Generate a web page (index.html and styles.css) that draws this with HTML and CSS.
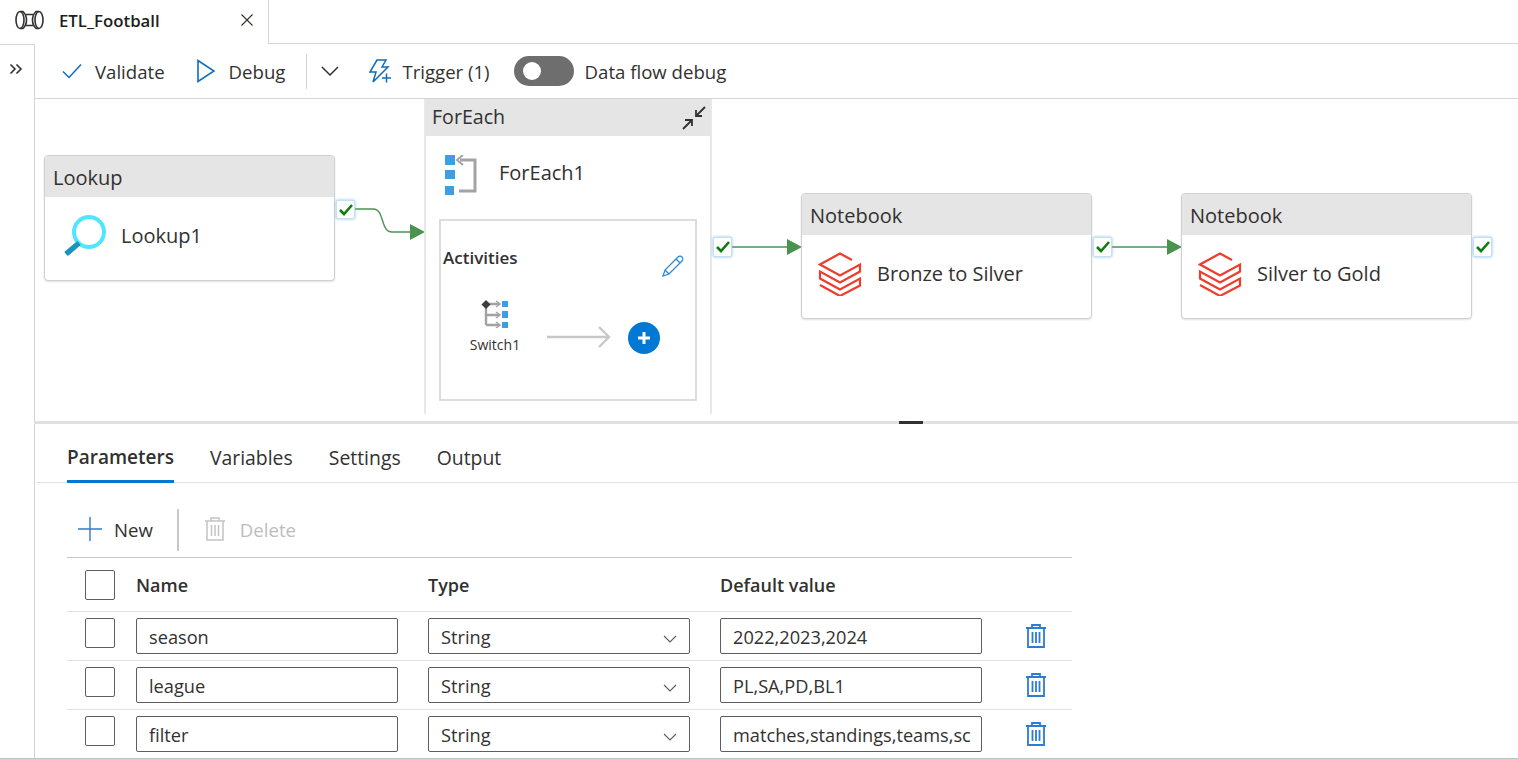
FILE: index.html
```html
<!DOCTYPE html>
<html lang="en">
<head>
    <meta charset="UTF-8">
    <meta name="viewport" content="width=device-width, initial-scale=1.0">
    <title>ETL_Football</title>
    <link rel="stylesheet" href="styles.css">
</head>
<body>

    <div class="tabbar">
        <div class="tab">
            <svg class="tab-icon" width="29" height="20" viewBox="0 0 29 20" fill="none" stroke="#323130" stroke-width="1.6">
                <ellipse cx="5" cy="10" rx="4" ry="8.500"/>
                <ellipse cx="24" cy="10" rx="4" ry="8.500"/>
                <path d="M5 1.500h3c2 2 3.500 5 3.500 8.500S10 16.500 8 18.500H5M11 4.500h7M11 15.500h7M24 1.500h-3c-2 2-3.500 5-3.500 8.500s1.500 6.500 3.500 8.500h3"/>
            </svg>
            <span class="tab-title">ETL_Football</span>
            <svg class="tab-close" width="12" height="12" viewBox="0 0 12 12" stroke="#323130" stroke-width="1.1"><path d="M0.5 0.5l11 11M11.5 0.5l-11 11"/></svg>
        </div>
    </div>

    <div class="main">
        <div class="sidebar">
            <svg width="14" height="12" viewBox="0 0 14 12" fill="none" stroke="#323130" stroke-width="1.6"><path d="M1.5 1.5l4.500 4.500-4.500 4.500M7.500 1.500l4.500 4.500-4.500 4.500"/></svg>
        </div>

        <div class="content">
            <div class="toolbar">
                <button class="tool tool-validate">
                    <svg width="20" height="16" viewBox="0 0 20 16" fill="none" stroke="#0f6cbd" stroke-width="1.5"><path d="M1 8.500l6 6L19 1.500"/></svg>
                    Validate
                </button>
                <button class="tool tool-debug">
                    <svg width="18" height="24" viewBox="0 0 18 24" fill="none" stroke="#0f6cbd" stroke-width="1.6"><path d="M1 1.500v21L17 12z"/></svg>
                    Debug
                </button>
                <span class="tool-sep"></span>
                <svg class="tool-chevron" width="18" height="10" viewBox="0 0 18 10" fill="none" stroke="#323130" stroke-width="1.5"><path d="M1 1l8 8 8-8"/></svg>
                <button class="tool tool-trigger">
                    <svg width="23" height="24" viewBox="0 0 23 24" fill="none" stroke="#0f6cbd" stroke-width="1.5"><path d="M8 1h9l-4 7h6L4 23l3-10H1zM13 19h9M17.500 14.500v9"/></svg>
                    Trigger (1)
                </button>
                <span class="toggle"><span class="toggle-knob"></span></span>
                <span class="tool-label">Data flow debug</span>
            </div>

            <div class="canvas">
                <svg class="links" width="1484" height="322" viewBox="0 0 1484 322" fill="none">
                    <path d="M321 110h18c12 0 7 23 19 23h20" stroke="#4a934f" stroke-width="1.4"/>
                    <path d="M376 125l15 8-15 8z" fill="#4a934f"/>
                    <path d="M698 148h56" stroke="#4a934f" stroke-width="1.6"/>
                    <path d="M753 140l15 8-15 8z" fill="#4a934f"/>
                    <path d="M1078 148h56" stroke="#4a934f" stroke-width="1.6"/>
                    <path d="M1133 140l15 8-15 8z" fill="#4a934f"/>
                </svg>

                <div class="node node-lookup">
                    <div class="node-head">Lookup</div>
                    <div class="node-body">
                        <svg class="node-icon" width="46" height="44" viewBox="0 0 46 44" fill="none">
                            <circle cx="28" cy="18" r="15" stroke="#50e6ff" stroke-width="4"/>
                            <path d="M18 29L5 40" stroke="#1b93c0" stroke-width="5.500"/>
                        </svg>
                        Lookup1
                    </div>
                </div>
                <span class="status status-lookup"><svg width="14" height="12" viewBox="0 0 14 12" fill="none" stroke="#107c10" stroke-width="2.600"><path d="M1 6l4 4 8-9"/></svg></span>

                <div class="node-foreach">
                    <div class="node-head">ForEach
                        <svg class="collapse" width="26" height="26" viewBox="0 0 26 26" fill="none" stroke="#323130" stroke-width="1.800"><path d="M24 2l-9 9M15 5v6h6M2 24l9-9M4 15h7v6"/></svg>
                    </div>
                    <div class="foreach-title">
                        <svg width="32" height="40" viewBox="0 0 32 40" fill="none">
                            <path d="M0 0h10v10H0zM0 15h10v9H0zM0 31h9v9H0z" fill="#3b9fe8"/>
                            <path d="M15 5h15v31H14" stroke="#a3a3a3" stroke-width="3"/>
                            <path d="M18 0l-6 5 6 5" stroke="#a3a3a3" stroke-width="2"/>
                        </svg>
                        <span class="foreach-name">ForEach1</span>
                    </div>
                    <div class="activities">
                        <div class="activities-head">
                            <b>Activities</b>
                            <svg width="22" height="22" viewBox="0 0 22 22" fill="none" stroke="#2b88d8" stroke-width="1.300"><path d="M1 21l2-6L16 2c1-1 3-1 4 0s1 3 0 4L7 19zM3 15l4 4M14 4l4 4"/></svg>
                        </div>
                        <div class="activities-row">
                            <div class="switch">
                                <svg width="28" height="28" viewBox="0 0 28 28" fill="none">
                                    <path d="M5 4v21M5 4h13M5 15h13M5 25h13" stroke="#a3a3a3" stroke-width="2.400"/>
                                    <path d="M15 1l4 3-4 3M15 12l4 3-4 3M15 22l4 3-4 3" stroke="#a3a3a3" stroke-width="1.500"/>
                                    <path d="M5 0l4.500 4.500L5 9 .5 4.500z" fill="#3c3c3c"/>
                                    <path d="M21 1h6v6h-6zM21 11h6v7h-6zM21 22h6v6h-6z" fill="#3b9fe8"/>
                                </svg>
                                <span>Switch1</span>
                            </div>
                            <svg class="add-arrow" width="64" height="22" viewBox="0 0 64 22" fill="none" stroke="#c8c8c8" stroke-width="2.400"><path d="M0 11h62M52 1l10 10-10 10"/></svg>
                            <span class="add-btn"><svg width="14" height="14" viewBox="0 0 14 14" stroke="#fff" stroke-width="3"><path d="M7 1v12M1 7h12"/></svg></span>
                        </div>
                    </div>
                </div>
                <span class="status status-foreach"><svg width="14" height="12" viewBox="0 0 14 12" fill="none" stroke="#107c10" stroke-width="2.600"><path d="M1 6l4 4 8-9"/></svg></span>

                <div class="node node-bronze">
                    <div class="node-head">Notebook</div>
                    <div class="node-body">
                        <svg class="node-icon" width="44" height="44" viewBox="0 0 44 44" fill="none" stroke="#ee3d2c" stroke-width="2.200"><path d="M34 8L22 1.500 2 12.500l20 11 20-11v7l-20 11-20-11v7l20 11 20-11v7l-20 10.500L2 33"/></svg>
                        Bronze to Silver
                    </div>
                </div>
                <span class="status status-bronze"><svg width="14" height="12" viewBox="0 0 14 12" fill="none" stroke="#107c10" stroke-width="2.600"><path d="M1 6l4 4 8-9"/></svg></span>

                <div class="node node-silver">
                    <div class="node-head">Notebook</div>
                    <div class="node-body">
                        <svg class="node-icon" width="44" height="44" viewBox="0 0 44 44" fill="none" stroke="#ee3d2c" stroke-width="2.200"><path d="M34 8L22 1.500 2 12.500l20 11 20-11v7l-20 11-20-11v7l20 11 20-11v7l-20 10.500L2 33"/></svg>
                        Silver to Gold
                    </div>
                </div>
                <span class="status status-silver"><svg width="14" height="12" viewBox="0 0 14 12" fill="none" stroke="#107c10" stroke-width="2.600"><path d="M1 6l4 4 8-9"/></svg></span>
            </div>

            <div class="splitter"><span class="splitter-handle"></span></div>

            <div class="panel">
                <div class="panel-tabs">
                    <span class="panel-tab active">Parameters</span>
                    <span class="panel-tab">Variables</span>
                    <span class="panel-tab">Settings</span>
                    <span class="panel-tab">Output</span>
                </div>

                <div class="params">
                    <div class="params-actions">
                        <button class="action">
                            <svg width="24" height="24" viewBox="0 0 24 24" stroke="#2b7cd3" stroke-width="1.400"><path d="M12 0v24M0 12h24"/></svg>
                            New
                        </button>
                        <span class="action-sep"></span>
                        <button class="action action-off">
                            <svg width="20" height="24" viewBox="0 0 20 24" fill="none" stroke="#c4c4c4" stroke-width="1.500"><path d="M0 4h20M6 4V1h8v3M2 4v19h16V4M6.500 8v11M10 8v11M13.500 8v11"/></svg>
                            Delete
                        </button>
                    </div>

                    <div class="row row-head">
                        <span class="check"></span>
                        <span class="col-name">Name</span>
                        <span class="col-type">Type</span>
                        <span class="col-value">Default value</span>
                    </div>

                    <div class="row">
                        <span class="check"></span>
                        <div class="field col-name">season</div>
                        <div class="field col-type">String
                            <svg width="14" height="8" viewBox="0 0 14 8" fill="none" stroke="#605e5c" stroke-width="1.100"><path d="M1 1l6 6 6-6"/></svg>
                        </div>
                        <div class="field col-value">2022,2023,2024</div>
                        <svg class="row-delete" width="20" height="24" viewBox="0 0 20 24" fill="none" stroke="#2b7cd3" stroke-width="1.800"><path d="M0 4h20M6 4V1h8v3M2 4v19h16V4M6.500 8v11M10 8v11M13.500 8v11"/></svg>
                    </div>

                    <div class="row">
                        <span class="check"></span>
                        <div class="field col-name">league</div>
                        <div class="field col-type">String
                            <svg width="14" height="8" viewBox="0 0 14 8" fill="none" stroke="#605e5c" stroke-width="1.100"><path d="M1 1l6 6 6-6"/></svg>
                        </div>
                        <div class="field col-value">PL,SA,PD,BL1</div>
                        <svg class="row-delete" width="20" height="24" viewBox="0 0 20 24" fill="none" stroke="#2b7cd3" stroke-width="1.800"><path d="M0 4h20M6 4V1h8v3M2 4v19h16V4M6.500 8v11M10 8v11M13.500 8v11"/></svg>
                    </div>

                    <div class="row">
                        <span class="check"></span>
                        <div class="field col-name">filter</div>
                        <div class="field col-type">String
                            <svg width="14" height="8" viewBox="0 0 14 8" fill="none" stroke="#605e5c" stroke-width="1.100"><path d="M1 1l6 6 6-6"/></svg>
                        </div>
                        <div class="field col-value">matches,standings,teams,sc</div>
                        <svg class="row-delete" width="20" height="24" viewBox="0 0 20 24" fill="none" stroke="#2b7cd3" stroke-width="1.800"><path d="M0 4h20M6 4V1h8v3M2 4v19h16V4M6.500 8v11M10 8v11M13.500 8v11"/></svg>
                    </div>
                </div>
            </div>
        </div>
    </div>

</body>
</html>
```

FILE: styles.css
```css
html, body { margin: 0; height: 100%; overflow: hidden; }
body { font-family: "Open Sans", "Noto Sans", sans-serif; font-size: 18.6px; color: #323130; background-color: #fff; }
button { font: inherit; color: inherit; background: none; border: 0; padding: 0; display: flex; align-items: center; }
svg { display: block; flex: none; }

/* top tab */
.tabbar { height: 43px; border-bottom: 1px solid #d4d4d4; }
.tab { width: 269px; height: 44px; box-sizing: border-box; background-color: #fff; border-right: 1px solid #d4d4d4; display: flex; align-items: center; padding: 0 15px 4px; }
.tab-icon { margin-right: 15px; }
.tab-title { font-size: 16.800px; font-weight: 600; color: #201f1e; flex: 1; }

.main { display: flex; height: 715px; box-sizing: border-box; border-bottom: 1px solid #bcc3c7; overflow: hidden; }
.sidebar { width: 25px; border-top: 1px solid #d4d4d4; border-right: 1px solid #d4d4d4; padding: 18px 0 0 9px; }
.content { flex: 1; min-width: 0; margin-left: -1px; }

/* toolbar */
.toolbar { height: 54px; border-bottom: 1px solid #d4d4d4; display: flex; align-items: center; padding-left: 28px; }
.tool { gap: 13px; padding-top: 1px; }
.tool svg { margin-top: -1px; }
.tool-debug { margin-left: 32px; gap: 14px; }
.tool-sep { width: 1px; height: 35px; background-color: #d4d4d4; margin-left: 21px; }
.tool-chevron { margin-left: 14px; }
.tool-trigger { margin-left: 30px; gap: 10px; }
.toggle { width: 60px; height: 30px; border-radius: 15px; background-color: #6e6e6e; margin-left: 24px; display: flex; align-items: center; padding-left: 9px; box-sizing: border-box; }
.toggle-knob { width: 18px; height: 18px; border-radius: 50%; background-color: #fff; }
.tool-label { margin-left: 11px; padding-top: 1px; }

/* pipeline canvas */
.canvas { position: relative; height: 322px; overflow: hidden; font-size: 20px; }
.links { position: absolute; left: 0; top: 0; }
.node, .node-foreach { position: absolute; background-color: #fff; box-sizing: border-box; border: 1px solid #d0d0d0; }
.node { width: 291px; height: 126px; border-radius: 4px; box-shadow: 0 1px 2px rgba(0, 0, 0, 0.12); overflow: hidden; }
.node-lookup { left: 10px; top: 56px; }
.node-bronze { left: 767px; top: 94px; }
.node-silver { left: 1147px; top: 94px; }
.node-head { height: 41px; box-sizing: border-box; padding: 2px 0 0 8px; background-color: #e5e5e5; display: flex; align-items: center; }
.node-body { display: flex; align-items: center; height: 76px; padding: 0 0 2px 16px; gap: 14px; }
.node-icon { margin-top: 2px; }
.node-bronze .node-body, .node-silver .node-body { gap: 15px; }

.node-foreach { left: 390px; top: 0; width: 288px; height: 315px; border-width: 0 2px; border-color: #e8e8e8; }
.node-foreach .node-head { height: 37px; padding: 0 0 2px 6px; justify-content: space-between; font-size: 19.600px; }
.collapse { margin: 2px 3px 0 0; }
.foreach-title { display: flex; align-items: center; gap: 22px; padding: 19px 0 0 19px; height: 40px; }
.foreach-name { margin-top: -6px; }
.activities { margin: 24px 0 0 13px; width: 258px; height: 182px; box-sizing: border-box; border: 2px solid #dcdcdc; padding: 25px 11px 0 2px; }
.activities-head { display: flex; justify-content: space-between; align-items: flex-start; font-size: 17px; }
.activities-head b { font-weight: 600; }
.activities-head svg { margin-top: 9px; }
.activities-row { display: flex; margin-top: 23px; }
.switch { width: 104px; display: flex; flex-direction: column; align-items: center; font-size: 14px; gap: 7px; }
.add-arrow { margin-top: 26px; }
.add-btn { width: 32px; height: 32px; border-radius: 50%; background-color: #0078d4; display: flex; align-items: center; justify-content: center; margin: 22px 0 0 17px; }

.status { position: absolute; width: 19px; height: 20px; box-sizing: border-box; background-color: #fff; border: 1px solid #c7e0f4; border-radius: 2px; box-shadow: 0 0 3px #7fbcec; display: flex; align-items: center; justify-content: center; }
.status-lookup { left: 302px; top: 101px; height: 19px; }
.status-foreach { left: 679px; top: 138px; }
.status-bronze { left: 1059px; top: 138px; }
.status-silver { left: 1439px; top: 138px; }

.splitter { height: 3px; background-color: #e1e1e1; }
.splitter-handle { display: block; width: 24px; height: 3px; margin-left: 865px; background-color: #323130; }

/* bottom panel */
.panel { padding-left: 3px; }
.panel-tabs { display: flex; height: 59px; gap: 36px; padding-left: 30px; border-bottom: 1px solid #e1e1e1; box-sizing: border-box; font-size: 19.400px; }
.panel-tab { padding-top: 20px; height: 36px; }
.panel-tab.active { font-size: 19px; font-weight: 600; border-bottom: 3px solid #0078d4; }

.params { margin-left: 30px; width: 1005px; }
.params-actions { display: flex; align-items: center; height: 75px; border-bottom: 1px solid #c8c8c8; box-sizing: border-box; padding: 20px 0 0 11px; }
.action { gap: 12px; padding-bottom: 2px; }
.action-sep { width: 2px; height: 42px; background-color: #c8c8c8; margin: 0 26px 0 24px; }
.action-off { color: #bdbdbd; gap: 15px; }

.row { display: flex; align-items: flex-start; height: 49px; box-sizing: border-box; padding: 6px 0 0 18px; border-bottom: 1px solid #e1e1e1; }
.row-head { height: 54px; padding-top: 11px; align-items: center; padding-bottom: 11px; font-size: 18px; font-weight: 600; }
.check { width: 30px; height: 30px; box-sizing: border-box; border: 1px solid #605e5c; border-radius: 2px; margin-right: 21px; }
.col-name, .col-type, .col-value { width: 262px; margin-right: 30px; }
.field { height: 36px; box-sizing: border-box; border: 1px solid #605e5c; border-radius: 2px; padding: 1px 12px 0; font-size: 18.200px; display: flex; align-items: center; justify-content: space-between; white-space: nowrap; overflow: hidden; }
.field svg { margin-top: 4px; }
.row-delete { margin: 6px 0 0 14px; }
```
